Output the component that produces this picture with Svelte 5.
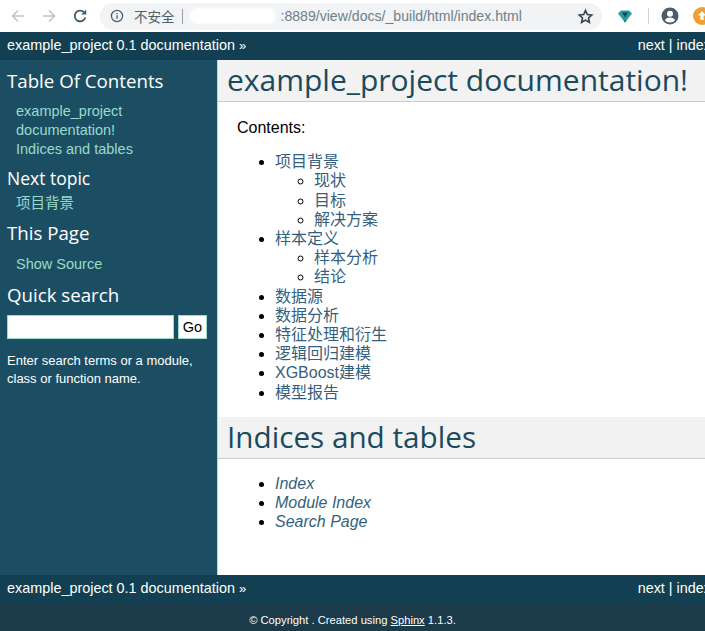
<script>
const tocTree = [
	{ title: '项目背景', children: ['现状', '目标', '解决方案'] },
	{ title: '样本定义', children: ['样本分析', '结论'] },
	{ title: '数据源' },
	{ title: '数据分析' },
	{ title: '特征处理和衍生' },
	{ title: '逻辑回归建模' },
	{ title: 'XGBoost建模' },
	{ title: '模型报告' },
];
const indices = ['Index', 'Module Index', 'Search Page'];
</script>

{#snippet related()}
	<div class="related">
		<span>example_project 0.1 documentation <span class="raquo">»</span></span>
		<span>next | index</span>
	</div>
{/snippet}

<div class="window">
	<header class="toolbar">
		<div class="nav-icons">
			<svg width="16" height="16" viewBox="0 0 16 16" fill="none" stroke="#b9c3c9" stroke-width="1.5"><path d="M14 8H2.500M8 2.500 2.500 8 8 13.500" /></svg>
			<svg width="16" height="16" viewBox="0 0 16 16" fill="none" stroke="#b9c3c9" stroke-width="1.5"><path d="M2 8h11.500M8 2.500 13.500 8 8 13.500" /></svg>
			<svg width="16" height="16" viewBox="0 0 16 16" fill="none" stroke="#3f5a6b" stroke-width="1.8"><path d="M13.300 9.500A5.400 5.400 0 1 1 11.800 4" /><path d="M14.200 1.500v5h-5z" fill="#3f5a6b" stroke="none" /></svg>
		</div>
		<div class="omnibox">
			<svg width="14" height="14" viewBox="0 0 14 14" fill="none" stroke="#4f5f6a" stroke-width="1.3"><circle cx="7" cy="7" r="5.600" /><path d="M7 6.200v3.600M7 4v1.200" /></svg>
			<span class="insecure">不安全</span>
			<span class="divider"></span>
			<span class="redacted"></span>
			<span class="url">:8889/view/docs/_build/html/index.html</span>
			<svg class="star" width="17" height="17" viewBox="0 0 24 24" fill="none" stroke="#33424d" stroke-width="2.300"><path d="M12 3.500l2.600 5.700 6.200.7-4.600 4.200 1.300 6.100L12 17.100l-5.500 3.100 1.300-6.100-4.600-4.200 6.200-.7z" /></svg>
		</div>
		<div class="ext-icons">
			<svg width="16" height="16" viewBox="0 0 16 16"><path d="M1 5.500 4 2.500h8l3 3L8 14.500z" fill="#2b9c9c" /><path d="M5 4.500h6L8 9.500z" fill="#0f4a5c" /><path d="M6.500 11.500 8 14.500l1.500-3L8 13z" fill="#16525f" /></svg>
			<span class="ext-divider"></span>
			<svg width="18" height="18" viewBox="0 0 18 18"><circle cx="9" cy="9" r="8.500" fill="#4f5b66" /><circle cx="9" cy="6.800" r="3" fill="#fff" /><path d="M3.800 13.200c1.300-2 3.300-2.700 5.200-2.700s3.900.7 5.200 2.700A6.800 6.800 0 0 1 3.800 13.200z" fill="#fff" /></svg>
			<svg class="ext-orange" width="18" height="18" viewBox="0 0 18 18"><circle cx="9" cy="9" r="9" fill="#f0a030" /><path d="M9 4l4 4.500h-2.400V13H7.400V8.500H5z" fill="#fff" /></svg>
		</div>
	</header>

	<div class="page">
		{@render related()}

		<div class="main">
			<aside class="sidebar">
				<h3>Table Of Contents</h3>
				<ul>
					<li>example_project documentation!</li>
					<li>Indices and tables</li>
				</ul>
				<h4>Next topic</h4>
				<p class="topless">项目背景</p>
				<h3 class="this-page">This Page</h3>
				<ul class="source-list">
					<li>Show Source</li>
				</ul>
				<h3 class="quick">Quick search</h3>
				<form class="search" onsubmit={(e) => e.preventDefault()}>
					<input type="text" name="q" />
					<button type="submit">Go</button>
				</form>
				<p class="search-hint">Enter search terms or a module, class or function name.</p>
			</aside>

			<main class="content">
				<h1>example_project documentation!</h1>
				<p class="caption">Contents:</p>
				<ul class="toc">
					{#each tocTree as item}
						<li>
							<a href="#top">{item.title}</a>
							{#if item.children}
								<ul>
									{#each item.children as child}
										<li><a href="#top">{child}</a></li>
									{/each}
								</ul>
							{/if}
						</li>
					{/each}
				</ul>
				<h2>Indices and tables</h2>
				<ul class="toc index-list">
					{#each indices as name}
						<li><a href="#top"><em>{name}</em></a></li>
					{/each}
				</ul>
			</main>
		</div>

		{@render related()}

		<footer class="footer">© Copyright . Created using <span class="sphinx">Sphinx</span> 1.1.3.</footer>
	</div>
</div>

<style>
	:global(body) {
		margin: 0;
		background: #fff;
	}

	.window {
		width: 705px;
		height: 631px;
		overflow: hidden;
		font-family: "Liberation Sans", Arial, "Noto Sans CJK SC", sans-serif;
		font-size: 16px;
	}

	.toolbar {
		display: flex;
		align-items: center;
		height: 32px;
		background: #fff;
	}

	.nav-icons {
		display: flex;
		gap: 15px;
		padding-left: 10px;
		width: 90px;
		box-sizing: border-box;
		flex: none;
	}

	.omnibox {
		display: flex;
		align-items: center;
		width: 502px;
		height: 27px;
		box-sizing: border-box;
		padding: 0 10px;
		border-radius: 14px;
		background: #f1f3f4;
		font-size: 14.100px;
		flex: none;
		margin-left: 10px;
	}

	.insecure {
		margin-left: 10px;
		color: #4f5f6a;
		font-size: 13.500px;
	}

	.divider {
		width: 1px;
		height: 15px;
		margin: 0 7px;
		background: #9aa0a6;
	}

	.redacted {
		width: 86px;
		height: 16px;
		margin-right: 5px;
		border-radius: 7px;
		background: #fff;
		filter: blur(1px);
		flex: none;
	}

	.url {
		color: #6e8089;
		white-space: nowrap;
	}

	.star {
		margin-left: auto;
		margin-right: -2px;
	}

	.ext-icons {
		display: flex;
		align-items: center;
		flex: none;
		margin-left: 15px;
	}

	.ext-divider {
		width: 1px;
		height: 16px;
		margin: 0 12px 0 15px;
		background: #ccd5da;
	}

	.ext-orange {
		margin-left: 14px;
		flex: none;
	}

	.page {
		width: 716px;
	}

	.related {
		display: flex;
		justify-content: space-between;
		align-items: center;
		height: 28px;
		padding: 0 5px 2px 7px;
		box-sizing: border-box;
		background: #133f52;
		color: #fff;
		font-size: 14.400px;
		white-space: nowrap;
	}

	.raquo {
		font-size: 13px;
	}

	.main {
		display: grid;
		grid-template-columns: 218px 1fr;
		height: 515px;
	}

	.sidebar {
		padding: 8px 7px 0;
		background: #1c4e63;
		border-right: 1px solid #c8d0d4;
		color: #fff;
		font-size: 13px;
		line-height: 19px;
	}

	.sidebar h3,
	.sidebar h4 {
		margin: 0;
		font-family: "Open Sans", sans-serif;
		font-weight: 500;
		color: #fff;
	}

	.sidebar h3 {
		font-size: 18.700px;
		line-height: 26px;
	}

	.sidebar h4 {
		margin-top: 7px;
		font-size: 17.500px;
		line-height: 24px;
	}

	.sidebar ul {
		margin: 8px 0 0;
		padding: 0 0 0 9px;
		list-style: none;
		color: #98dbcc;
		font-size: 14.500px;
	}

	.sidebar .source-list {
		margin-top: 9px;
	}

	.topless {
		margin: 4px 0 0 9px;
		color: #98dbcc;
		font-size: 14.500px;
	}

	.this-page {
		margin-top: 7px !important;
	}

	.quick {
		margin-top: 8px !important;
	}

	.search {
		display: flex;
		justify-content: space-between;
		width: 200px;
		margin-top: 7px;
	}

	.search input {
		width: 167px;
		height: 24px;
		box-sizing: border-box;
		padding: 0;
		border: 1px solid #98dbcc;
		background: #fff;
	}

	.search button {
		width: 29px;
		height: 24px;
		padding: 0;
		border: 1px solid #98dbcc;
		background: #fff;
		font: inherit;
		font-size: 14.500px;
		color: #000;
	}

	.search-hint {
		margin: 13px 0 0;
		font-size: 13px;
		line-height: 17.500px;
	}

	.content {
		background: #fff;
		color: #000;
		line-height: 19.200px;
	}

	.content h1,
	.content h2 {
		margin: 0;
		padding: 0 0 1px 9px;
		background: #f2f2f2;
		border-bottom: 1px solid #ccc;
		color: #1a4a5e;
		font-family: "Open Sans", sans-serif;
		font-weight: 400;
		white-space: nowrap;
		line-height: 40px;
	}

	.content h1 {
		font-size: 30px;
	}

	.content h2 {
		margin-top: 15px;
		font-size: 29.700px;
	}

	.caption {
		margin: 16px 0 0 19px;
	}

	.toc {
		margin: 15px 0 0;
		padding-left: 57px;
	}

	.toc ul {
		margin: 0;
		padding-left: 39px;
		list-style: circle;
	}

	.toc a {
		color: #355f7c;
		text-decoration: none;
	}

	.index-list {
		margin-top: 15px;
	}

	.footer {
		height: 28px;
		width: 705px;
		box-sizing: border-box;
		padding-top: 10px;
		border-top: 1px solid #133f52;
		background: #1b3a4a;
		color: #fff;
		font-size: 11.200px;
		text-align: center;
	}

	.sphinx {
		text-decoration: underline;
	}
</style>
